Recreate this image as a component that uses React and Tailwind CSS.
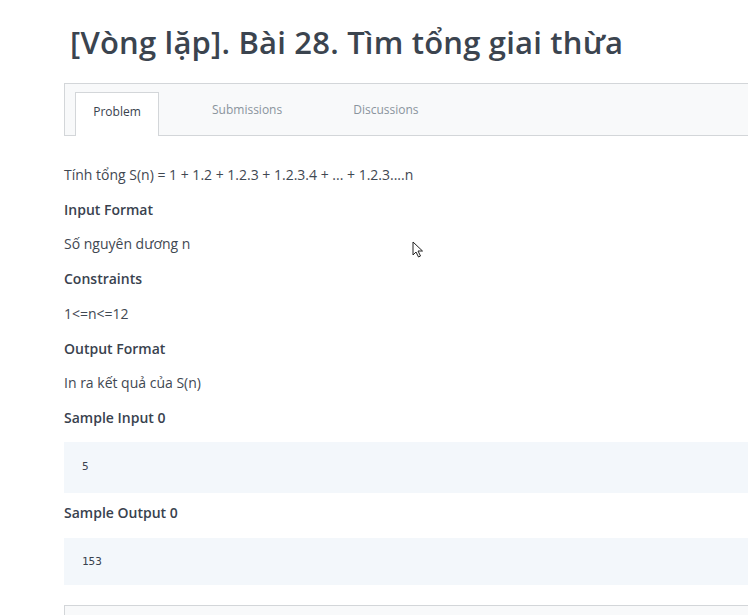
export default function App() {
  return (
    <div className="w-[748px] h-[615px] overflow-hidden bg-white relative font-['Open_Sans',sans-serif]">
      <div className="pl-[64px]">
        <h1 className="pl-[6px] pt-[22px] h-[83px] text-[31px] leading-[40px] font-semibold text-[#3b444f] tracking-[0.2px]">
          [Vòng lặp]. Bài 28. Tìm tổng giai thừa
        </h1>

        {/* tabs */}
        <div className="h-[53px] bg-[#f8f9fa] border-y border-l border-[#d3d6d9] flex items-end pl-[10px]">
          <div className="w-[84px] h-[44px] bg-white border-t border-x border-[#d3d6d9] -mb-px flex justify-center pt-[9px] text-[12px] leading-[20px] text-[#39424e]">
            Problem
          </div>
          <div className="ml-[53px] h-[44px] pt-[9px] text-[12px] leading-[20px] text-[#8a949d]">Submissions</div>
          <div className="ml-[71px] h-[44px] pt-[9px] text-[12px] leading-[20px] text-[#8a949d]">Discussions</div>
        </div>

        {/* body */}
        <div className="pt-[22px] text-[14px] text-[#3f4852]">
          <p className="leading-[34.7px]">Tính tổng S(n) = 1 + 1.2 + 1.2.3 + 1.2.3.4 + ... + 1.2.3....n</p>
          <p className="leading-[34.7px] font-semibold text-[#39424e]">Input Format</p>
          <p className="leading-[34.7px]">Số nguyên dương n</p>
          <p className="leading-[34.7px] font-semibold text-[#39424e]">Constraints</p>
          <p className="leading-[34.7px]">1&lt;=n&lt;=12</p>
          <p className="leading-[34.7px] font-semibold text-[#39424e]">Output Format</p>
          <p className="leading-[34.7px]">In ra kết quả của S(n)</p>
          <p className="leading-[34.7px] font-semibold text-[#39424e]">Sample Input 0</p>
          <div className="mt-[6px] h-[51px] bg-[#f3f7fb] flex items-center pl-[18px] font-['DejaVu_Sans_Mono',monospace] text-[11px] text-[#39424e]">
            5
          </div>
          <p className="mt-[3px] leading-[34.7px] font-semibold text-[#39424e]">Sample Output 0</p>
          <div className="mt-[8px] h-[47px] bg-[#f3f7fb] flex items-center pl-[18px] font-['DejaVu_Sans_Mono',monospace] text-[11px] text-[#39424e]">
            153
          </div>
          <div className="mt-[20px] h-[40px] bg-[#f8f9fa] border-t border-l border-[#d3d6d9]" />
        </div>
      </div>

      {/* mouse cursor */}
      <svg className="absolute left-[412px] top-[241px]" width="12" height="18" viewBox="0 0 12 18">
        <path d="M1 1 L1 14 L4 11 L6.5 16 L8.5 15 L6 10 L10.5 10 Z" fill="#fff" stroke="#222" strokeWidth="1" strokeLinejoin="round" />
      </svg>
    </div>
  );
}
